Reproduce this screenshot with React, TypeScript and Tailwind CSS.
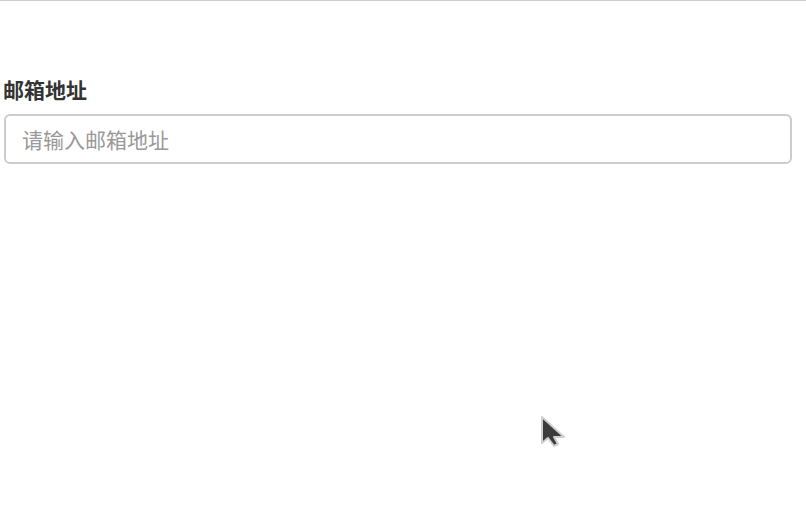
export default function App() {
  return (
    <div className="relative h-[506px] w-[806px] overflow-hidden bg-white font-['Noto_Sans_CJK_SC',_'Noto_Sans',_sans-serif]">
      <div className="h-px w-full bg-[#cccccc]" />
      <div className="px-[4px] pt-[73px]">
        <label className="-ml-[1px] block text-[21px] font-bold leading-[31px] text-[#333333]">邮箱地址</label>
        <input
          type="text"
          placeholder="请输入邮箱地址"
          className="mt-[9px] h-[50px] w-[788px] rounded-[6px] border-2 border-[#cccccc] bg-white px-[16px] text-[21px] text-[#333333] outline-none placeholder:text-[#999999]"
        />
      </div>
      <svg
        className="absolute left-[538px] top-[413px]"
        width="30"
        height="38"
        viewBox="0 0 30 38"
      >
        <path
          d="M4 4 L4 30 L10 25 L16 33 L20 31 L16 24 L26 24 Z"
          fill="#3c3c3c"
          stroke="#cfcfcf"
          strokeWidth="2"
          strokeLinejoin="round"
        />
      </svg>
    </div>
  );
}
